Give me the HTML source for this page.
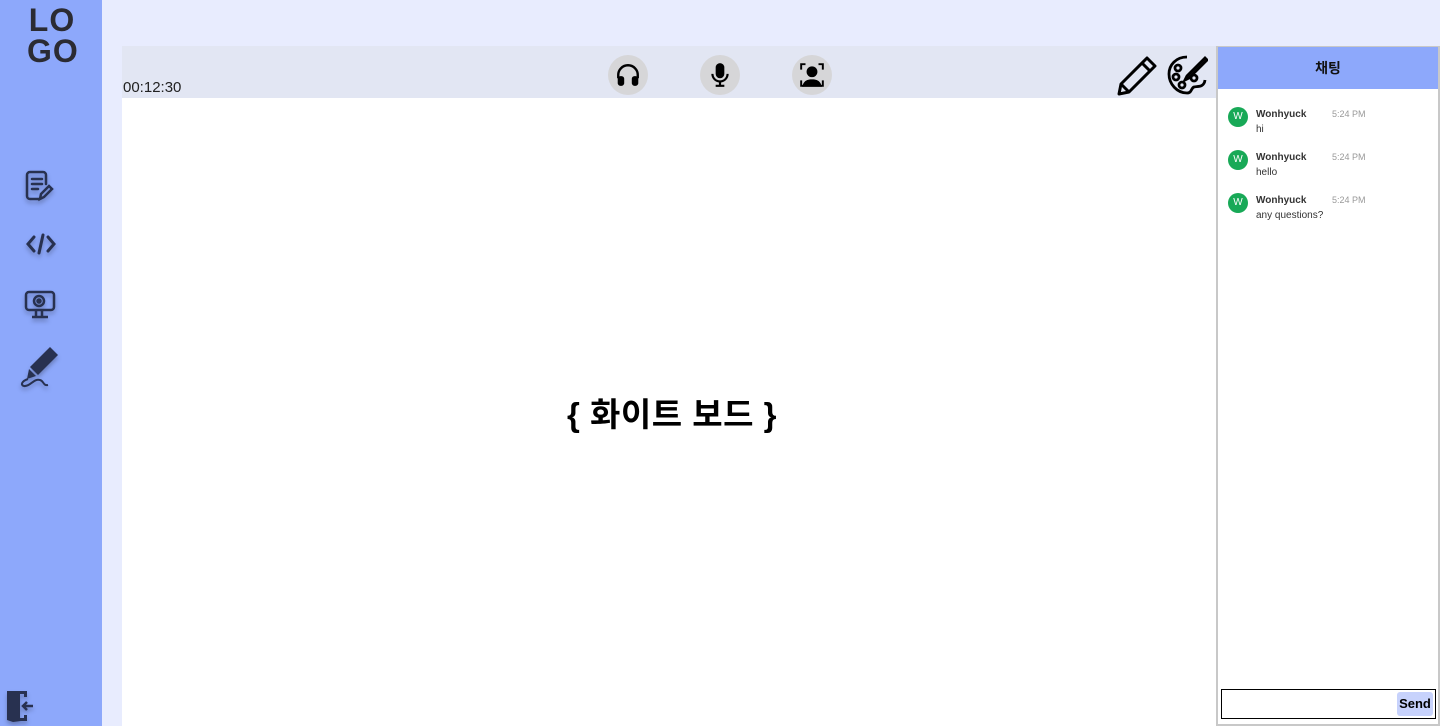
<!DOCTYPE html>
<html><head><meta charset="utf-8"><style>
*{margin:0;padding:0;box-sizing:border-box}
body{width:1440px;height:726px;overflow:hidden;background:#e8ecfe;font-family:"Liberation Sans","Noto Sans CJK KR",sans-serif;position:relative}
.side{position:absolute;left:0;top:0;width:102px;height:726px;background:#8da8fb}
.logo{position:absolute;left:27px;top:5px;font-size:32px;font-weight:bold;color:#2b2b33;line-height:31px;letter-spacing:1px;text-align:center;width:50px}
.ic{position:absolute;filter:drop-shadow(0 3px 2px rgba(0,0,0,.25))}
.bar{position:absolute;left:122px;top:46px;width:1095px;height:52px;background:#e2e6f3}
.time{position:absolute;left:123px;top:79px;font-size:15px;color:#222}
.circ{position:absolute;top:55px;width:40px;height:40px;border-radius:50%;background:#d6d6d8;display:flex;align-items:center;justify-content:center}
.wb{position:absolute;left:122px;top:98px;width:1095px;height:628px;background:#fff}
.wbt{position:absolute;left:567px;top:388px;font-size:33px;font-weight:bold;color:#000;white-space:nowrap;letter-spacing:0.5px}
.chat{position:absolute;left:1216px;top:46px;width:224px;height:680px;background:#fff;border:2px solid #c8c8c8;border-top:1px solid #c8c8c8}
.ch{height:42px;background:#8da8fb;text-align:center;font-size:14px;font-weight:bold;line-height:42px;color:#111}
.msg{position:absolute;left:10px;font-size:10px;color:#333}
.av{position:absolute;left:0;top:0;width:20px;height:20px;border-radius:50%;background:#18a957;color:#fff;font-size:10px;text-align:center;line-height:20px}
.nm{position:absolute;left:28px;top:2px;font-weight:bold;white-space:nowrap}
.tm{position:absolute;left:104px;top:2px;color:#999;font-size:9px;white-space:nowrap}
.tx{position:absolute;left:28px;top:17px;white-space:nowrap}
.inp{position:absolute;left:3px;top:642px;width:215px;height:30px;border:1px solid #000}
.send{position:absolute;right:2px;top:2px;width:36px;height:24px;background:#c7d2fc;border-radius:3px;font-weight:bold;font-size:13px;text-align:center;line-height:24px}
</style></head><body>
<div class="side">
<div class="logo">LO<br>GO</div>
<svg class="ic" style="left:25px;top:170px" width="30" height="32" viewBox="0 0 30 32" fill="none" stroke="#283150" stroke-width="2.5" stroke-linecap="round"><path d="M14 29H5a3 3 0 0 1-3-3V5a3 3 0 0 1 3-3h13a3 3 0 0 1 3 3v9"/><path d="M7 9h10M7 14h10M7 19h6"/><path d="M15 29l1-5 8-8 3 3-8 8z"/></svg>
<svg class="ic" style="left:26px;top:233px" width="30" height="22" viewBox="0 0 30 22" fill="none" stroke="#283150" stroke-width="3" stroke-linecap="round"><path d="M8 4L2 11l6 7M22 4l6 7-6 7M17 2l-4 18"/></svg>
<svg class="ic" style="left:24px;top:290px" width="32" height="30" viewBox="0 0 32 30" fill="none" stroke="#283150" stroke-width="2.5"><rect x="2" y="2" width="28" height="18" rx="3"/><circle cx="15" cy="11" r="5"/><circle cx="15" cy="11" r="1.5" fill="#283150"/><path d="M12 20v6M18 20v6M8 27h16"/></svg>
<svg class="ic" style="left:20px;top:345px" width="40" height="44" viewBox="0 0 40 44"><path d="M30 2l8 8-20 20-8-8z" fill="#283150"/><path d="M9 24l7 7-9 3z" fill="#283150"/><path d="M8 34c-6 2-8 6-4 7 6 1 10-8 16-6 4 1 3 6 8 5" fill="none" stroke="#283150" stroke-width="2"/></svg>
<svg class="ic" style="left:6px;top:690px" width="30" height="32" viewBox="0 0 30 32"><path d="M1 1h20v6h-3V4h-4v24h4v-3h3v6H15l-8 1L1 30z" fill="#283150"/><path d="M27 16H17M21 12l-4 4 4 4" stroke="#283150" stroke-width="2.5" fill="none"/></svg>
</div>
<div class="bar"></div>
<div class="time">00:12:30</div>
<div class="circ" style="left:608px"><svg width="26" height="26" viewBox="0 0 24 24"><path d="M3 15v-3a9 9 0 0 1 18 0v3" fill="none" stroke="#000" stroke-width="2.2"/><rect x="2.5" y="13" width="6" height="9" rx="2.5"/><rect x="15.5" y="13" width="6" height="9" rx="2.5"/></svg></div>
<div class="circ" style="left:700px"><svg width="26" height="26" viewBox="0 0 24 24"><rect x="8" y="1" width="8" height="14" rx="4"/><path d="M5 11a7 7 0 0 0 14 0M12 18v4M8 22h8" fill="none" stroke="#000" stroke-width="2"/></svg></div>
<div class="circ" style="left:792px"><svg width="26" height="26" viewBox="0 0 24 24"><path d="M2 7V2h4M18 2h4v5M2 17v5h2M22 17v5h-2" fill="none" stroke="#000" stroke-width="1.8"/><circle cx="12" cy="9" r="5"/><path d="M3 23c1-6 5-7 9-7s8 1 9 7z"/></svg></div>
<svg style="position:absolute;left:1116px;top:55px" width="42" height="42" viewBox="0 0 42 42" fill="none" stroke="#000" stroke-width="3" stroke-linejoin="round"><path d="M31 3l8 8-26 26-10 2 2-10z"/><path d="M26 8l8 8M5 29l8 8"/></svg>
<svg style="position:absolute;left:1166px;top:54px" width="42" height="42" viewBox="0 0 42 42" fill="none" stroke="#000" stroke-width="2.8"><path d="M21 3C10 3 3 11 3 20c0 10 8 19 18 19 5 0 4-5 7-6s10 1 11-7"/><circle cx="12" cy="14" r="3"/><circle cx="10" cy="23" r="3"/><circle cx="16" cy="31" r="3"/><circle cx="28" cy="24" r="3"/><path d="M39 4L21 22l-2 4 4-2L41 6z"/></svg>
<div class="wb"></div>
<div class="wbt">{ 화이트 보드 }</div>
<div class="chat">
<div class="ch">채팅</div>
<div class="msg" style="top:60px"><div class="av">W</div><div class="nm">Wonhyuck</div><div class="tm">5:24 PM</div><div class="tx">hi</div></div>
<div class="msg" style="top:103px"><div class="av">W</div><div class="nm">Wonhyuck</div><div class="tm">5:24 PM</div><div class="tx">hello</div></div>
<div class="msg" style="top:146px"><div class="av">W</div><div class="nm">Wonhyuck</div><div class="tm">5:24 PM</div><div class="tx">any questions?</div></div>
<div class="inp"><div class="send">Send</div></div>
</div>
</body></html>
